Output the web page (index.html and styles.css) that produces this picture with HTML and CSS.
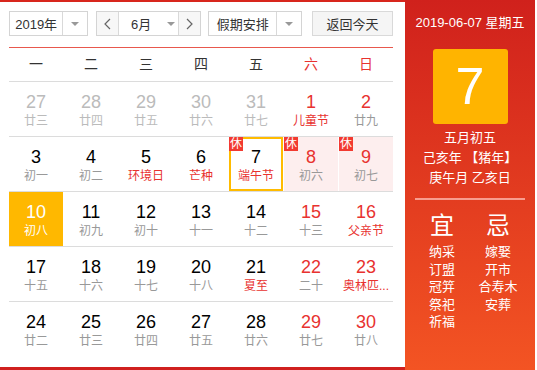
FILE: index.html
```html
<!DOCTYPE html>
<html lang="zh-CN">
<head>
<meta charset="utf-8">
<title>万年历</title>
<link rel="stylesheet" href="styles.css">
</head>
<body>
<div class="main">
  <div class="controls">
    <div class="select year"><span class="label">2019年</span><span class="drop"><i class="tri"></i></span></div>
    <div class="month">
      <span class="nav"><svg width="7" height="12" viewBox="0 0 7 12"><polyline points="6,1 1,6 6,11" fill="none" stroke="#666" stroke-width="1.2"/></svg></span>
      <span class="mid"><span class="label">6月</span><i class="tri"></i></span>
      <span class="nav"><svg width="7" height="12" viewBox="0 0 7 12"><polyline points="1,1 6,6 1,11" fill="none" stroke="#666" stroke-width="1.2"/></svg></span>
    </div>
    <div class="select holiday"><span class="label">假期安排</span><span class="drop"><i class="tri"></i></span></div>
    <button class="today">返回今天</button>
  </div>

  <div class="week">
    <span>一</span><span>二</span><span>三</span><span>四</span><span>五</span><span class="red">六</span><span class="red">日</span>
  </div>

  <div class="row">
    <div class="cell other"><b>27</b><em>廿三</em></div>
    <div class="cell other"><b>28</b><em>廿四</em></div>
    <div class="cell other"><b>29</b><em>廿五</em></div>
    <div class="cell other"><b>30</b><em>廿六</em></div>
    <div class="cell other"><b>31</b><em>廿七</em></div>
    <div class="cell wk fest"><b>1</b><em>儿童节</em></div>
    <div class="cell wk"><b>2</b><em>廿九</em></div>
  </div>
  <div class="row">
    <div class="cell"><b>3</b><em>初一</em></div>
    <div class="cell"><b>4</b><em>初二</em></div>
    <div class="cell fest"><b>5</b><em>环境日</em></div>
    <div class="cell fest"><b>6</b><em>芒种</em></div>
    <div class="cell fest sel"><span class="rest">休</span><b>7</b><em>端午节</em></div>
    <div class="cell wk off"><span class="rest">休</span><b>8</b><em>初六</em></div>
    <div class="cell wk off"><span class="rest">休</span><b>9</b><em>初七</em></div>
  </div>
  <div class="row">
    <div class="cell now"><b>10</b><em>初八</em></div>
    <div class="cell"><b>11</b><em>初九</em></div>
    <div class="cell"><b>12</b><em>初十</em></div>
    <div class="cell"><b>13</b><em>十一</em></div>
    <div class="cell"><b>14</b><em>十二</em></div>
    <div class="cell wk"><b>15</b><em>十三</em></div>
    <div class="cell wk fest"><b>16</b><em>父亲节</em></div>
  </div>
  <div class="row">
    <div class="cell"><b>17</b><em>十五</em></div>
    <div class="cell"><b>18</b><em>十六</em></div>
    <div class="cell"><b>19</b><em>十七</em></div>
    <div class="cell"><b>20</b><em>十八</em></div>
    <div class="cell fest"><b>21</b><em>夏至</em></div>
    <div class="cell wk"><b>22</b><em>二十</em></div>
    <div class="cell wk fest"><b>23</b><em>奥林匹...</em></div>
  </div>
  <div class="row last">
    <div class="cell"><b>24</b><em>廿二</em></div>
    <div class="cell"><b>25</b><em>廿三</em></div>
    <div class="cell"><b>26</b><em>廿四</em></div>
    <div class="cell"><b>27</b><em>廿五</em></div>
    <div class="cell"><b>28</b><em>廿六</em></div>
    <div class="cell wk"><b>29</b><em>廿七</em></div>
    <div class="cell wk"><b>30</b><em>廿八</em></div>
  </div>
</div>

<aside class="panel">
  <div class="date">2019-06-07 星期五</div>
  <div class="big">7</div>
  <div class="lunar">
    <div>五月初五</div>
    <div>己亥年 【猪年】</div>
    <div>庚午月 乙亥日</div>
  </div>
  <div class="divider"></div>
  <div class="yiji">
    <div class="col">
      <div class="head">宜</div>
      <div>纳采</div><div>订盟</div><div>冠笄</div><div>祭祀</div><div>祈福</div>
    </div>
    <div class="col">
      <div class="head">忌</div>
      <div>嫁娶</div><div>开市</div><div>合寿木</div><div>安葬</div>
    </div>
  </div>
</aside>
</body>
</html>
```

FILE: styles.css
```css
* { box-sizing: border-box; margin: 0; padding: 0; }
html, body { width: 537px; height: 370px; overflow: hidden; background: #fff; }
body {
  display: flex;
  font-family: "Liberation Sans", "Noto Sans CJK SC", sans-serif;
  color: #333;
}

.main {
  width: 405px;
  height: 370px;
  border-top: 2px solid #d8261d;
  border-bottom: 3px solid #d0201f;
  padding: 9px 12px 0 9px;
}

/* controls */
.controls { display: flex; height: 25px; font-size: 13px; color: #333; }
.select, .month {
  display: flex;
  height: 25px;
  border: 1px solid #d4d4d4;
  background: #fff;
}
.select .label { display: flex; align-items: center; justify-content: center; border-right: 1px solid #d9d9d9; }
.select .drop { display: flex; align-items: center; justify-content: center; width: 24px; }
.tri {
  display: block; width: 0; height: 0;
  border-left: 4px solid transparent; border-right: 4px solid transparent;
  border-top: 4px solid #999;
}
.year { width: 79px; }
.year .label { width: 54px; }
.month { width: 105px; margin-left: 8px; }
.month .nav { display: flex; align-items: center; justify-content: center; width: 22px; background: #f7f7f7; }
.month .nav:first-child { border-right: 1px solid #d9d9d9; }
.month .nav:last-child { border-left: 1px solid #d9d9d9; }
.month .mid { flex: 1; display: flex; align-items: center; padding-left: 12px; }
.month .mid .label { width: 36px; }
.holiday { width: 94px; margin-left: 7px; }
.holiday .label { width: 69px; }
.today {
  width: 81px; height: 25px; margin-left: 10px;
  border: 1px solid #d9d9d9; background: #f5f5f5;
  font: inherit; color: #333;
}

/* week header */
.week {
  display: grid;
  grid-template-columns: repeat(7, 54px);
  column-gap: 1px;
  height: 35px;
  margin-top: 11px;
  border-top: 1px solid #e8584d;
  border-bottom: 1px solid #dcdcdc;
  font-size: 14px;
  line-height: 33px;
  text-align: center;
  color: #333;
}
.week .red { color: #e8322f; }

/* date rows */
.row {
  display: grid;
  grid-template-columns: repeat(7, 54px);
  column-gap: 1px;
  height: 55px;
  border-bottom: 1px solid #dcdcdc;
}
.row.last { height: 54px; border-bottom: 0; }
.cell {
  position: relative;
  display: flex;
  flex-direction: column;
  align-items: center;
  padding-top: 10px;
  height: 54px;
}
.cell b { font-weight: normal; font-size: 18px; line-height: 20px; color: #000; }
.cell em { font-style: normal; font-size: 12px; line-height: 18px; color: #999; white-space: nowrap; }
.cell.other b, .cell.other em { color: #bbb; }
.cell.wk b { color: #e8322f; }
.cell.fest em { color: #e8322f; }
.cell.off { background: #fdeeee; }
.cell.sel { box-shadow: inset 0 0 0 2px #ffbb00; }
.cell.now { background: #ffb800; }
.cell.now b, .cell.now em { color: #fff; }
.rest {
  position: absolute; top: 0; left: 0;
  width: 14px; height: 14px;
  background: #f23a30; color: #fff;
  font-size: 12px; line-height: 14px; text-align: center;
}

/* right panel */
.panel {
  width: 130px;
  height: 370px;
  background: linear-gradient(#d0211c, #f35423);
  color: #fff;
  text-align: center;
  padding-top: 14px;
}
.date { font-size: 13px; line-height: 18px; }
.big {
  width: 75px; height: 75px;
  margin: 17px auto 0;
  background: #ffb400;
  border-radius: 3px;
  font-size: 52px; line-height: 75px;
}
.lunar { margin-top: 4px; font-size: 13px; line-height: 20px; }
.divider { height: 2px; margin: 10px 10px 0; background: rgba(255, 190, 180, 0.75); }
.yiji { display: flex; padding: 11px 9px 0; }
.col { width: 56px; font-size: 13px; line-height: 17.5px; }
.col .head { font-size: 24px; line-height: 30px; margin-bottom: 2px; }
```
